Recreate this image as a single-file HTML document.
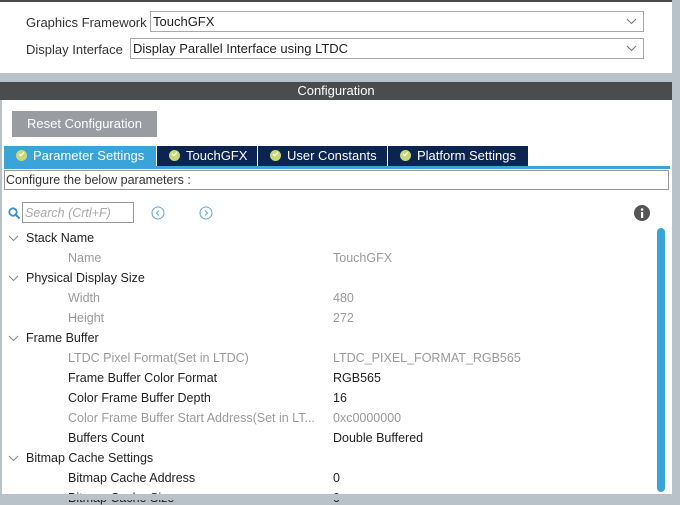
<!DOCTYPE html>
<html><head><style>
*{margin:0;padding:0;box-sizing:border-box}
body{width:680px;height:500px;background:#b9c2c8;font-family:"Liberation Sans",Arial,sans-serif;font-size:12.5px;color:#222;position:relative;overflow:hidden}
.a{position:absolute}
.sel{position:absolute;background:#fff;border:1px solid #a8a8a8;height:21px;padding:2px 0 0 2px;font-size:13px}
.sel svg{position:absolute;right:6px;top:6px}
.tab{position:absolute;top:146px;height:20px;background:#0b2452;color:#fff;font-size:13px;padding:2px 0 0 12px;white-space:nowrap}
.tab i{display:inline-block;width:11px;height:11px;border-radius:50%;background:#c9d97a;margin-right:6px;vertical-align:-1px;position:relative}
.tab i:after{content:"";position:absolute;left:3px;top:2px;width:4px;height:2px;border-left:1.5px solid #fff;border-bottom:1.5px solid #fff;transform:rotate(-45deg)}
.r{position:absolute;font-size:12.5px;white-space:nowrap}
.g{color:#222;left:26px}
.c{left:68px;color:#222}
.d{color:#9a9a9a}
.v{left:333px}
#tree{position:absolute;left:0;top:1px;width:680px;height:500px}
</style></head><body>
<div class="a" style="left:0;top:0;width:672px;height:73px;background:#fff;border-top:2px solid #4a4a4a"></div>
<div class="r" style="left:26px;top:15px;font-size:13px;color:#333">Graphics Framework</div>
<div class="sel" style="left:150px;top:11px;width:494px">TouchGFX<svg width="11" height="7"><path d="M1 1l4.5 4.5L10 1" stroke="#777" fill="none"/></svg></div>
<div class="r" style="left:26px;top:42px;font-size:13px;color:#333">Display Interface</div>
<div class="sel" style="left:130px;top:38px;width:514px">Display Parallel Interface using LTDC<svg width="11" height="7"><path d="M1 1l4.5 4.5L10 1" stroke="#777" fill="none"/></svg></div>
<div class="a" style="left:2px;top:82px;width:670px;height:413px;background:#fff"></div>
<div class="a" style="left:0;top:82px;width:672px;height:18px;background:#4b4c4e;color:#fff;text-align:center;font-size:13px;line-height:18px">Configuration</div>
<div class="a" style="left:12px;top:111px;width:145px;height:26px;background:#999da2;color:#fff;font-size:13px;text-align:center;line-height:26px">Reset Configuration</div>
<div class="tab" style="left:4px;width:152px;background:#3aa3d8"><i></i>Parameter Settings</div>
<div class="tab" style="left:157px;width:100px"><i></i>TouchGFX</div>
<div class="tab" style="left:258px;width:129px"><i></i>User Constants</div>
<div class="tab" style="left:388px;width:140px"><i></i>Platform Settings</div>
<div class="a" style="left:4px;top:166px;width:666px;height:3px;background:#3aa3d8"></div>
<div class="a" style="left:4px;top:170px;width:665px;height:20px;border:1px solid #999;padding:2px 0 0 1px;font-size:12.5px;color:#333">Configure the below parameters :</div>
<svg class="a" style="left:8px;top:207px" width="13" height="13"><circle cx="5" cy="5" r="3.7" stroke="#3a8fd0" stroke-width="1.8" fill="none"/><path d="M8 8l3.5 3.5" stroke="#3a8fd0" stroke-width="2"/></svg>
<div class="a" style="left:22px;top:202px;width:112px;height:21px;border:1px solid #999;color:#aaa;font-style:italic;padding:3px 0 0 2px;font-size:12.5px">Search (Crtl+F)</div>
<svg class="a" style="left:151px;top:206px" width="14" height="14"><circle cx="7" cy="7" r="6" stroke="#5ba7d9" fill="none"/><path d="M8 4.5L5.5 7 8 9.5" stroke="#5ba7d9" fill="none"/></svg>
<svg class="a" style="left:199px;top:206px" width="14" height="14"><circle cx="7" cy="7" r="6" stroke="#5ba7d9" fill="none"/><path d="M6 4.5L8.5 7 6 9.5" stroke="#5ba7d9" fill="none"/></svg>
<svg class="a" style="left:634px;top:205px" width="16" height="16"><circle cx="8" cy="8" r="8" fill="#555"/><rect x="7" y="7" width="2.2" height="6" fill="#fff"/><circle cx="8.1" cy="4.5" r="1.3" fill="#fff"/></svg>
<div class="a" style="left:657px;top:228px;width:8px;height:264px;border-radius:4px;background:#3aa3d8"></div>
<div id="tree">
<div class="r" style="left:26px;top:230px">Stack Name</div>
<div class="r c d" style="top:250px">Name</div><div class="r v d" style="top:250px">TouchGFX</div>
<div class="r" style="left:26px;top:270px">Physical Display Size</div>
<div class="r c d" style="top:290px">Width</div><div class="r v d" style="top:290px">480</div>
<div class="r c d" style="top:310px">Height</div><div class="r v d" style="top:310px">272</div>
<div class="r" style="left:26px;top:330px">Frame Buffer</div>
<div class="r c d" style="top:350px">LTDC Pixel Format(Set in LTDC)</div><div class="r v d" style="top:350px">LTDC_PIXEL_FORMAT_RGB565</div>
<div class="r c" style="top:370px">Frame Buffer Color Format</div><div class="r v" style="top:370px">RGB565</div>
<div class="r c" style="top:390px">Color Frame Buffer Depth</div><div class="r v" style="top:390px">16</div>
<div class="r c d" style="top:410px">Color Frame Buffer Start Address(Set in LT...</div><div class="r v d" style="top:410px">0xc0000000</div>
<div class="r c" style="top:430px">Buffers Count</div><div class="r v" style="top:430px">Double Buffered</div>
<div class="r" style="left:26px;top:450px">Bitmap Cache Settings</div>
<div class="r c" style="top:470px">Bitmap Cache Address</div><div class="r v" style="top:470px">0</div>
<div class="r c" style="top:490px">Bitmap Cache Size</div><div class="r v" style="top:490px">0</div>
<svg class="a" style="left:8px;top:234px" width="11" height="7"><path d="M1 1l4.5 4.5L10 1" stroke="#888" fill="none"/></svg>
<svg class="a" style="left:8px;top:274px" width="11" height="7"><path d="M1 1l4.5 4.5L10 1" stroke="#888" fill="none"/></svg>
<svg class="a" style="left:8px;top:334px" width="11" height="7"><path d="M1 1l4.5 4.5L10 1" stroke="#888" fill="none"/></svg>
<svg class="a" style="left:8px;top:454px" width="11" height="7"><path d="M1 1l4.5 4.5L10 1" stroke="#888" fill="none"/></svg>
</div>
<div class="a" style="left:0;top:494px;width:680px;height:6px;background:#b9c2c8;z-index:5"></div>
</body></html>
